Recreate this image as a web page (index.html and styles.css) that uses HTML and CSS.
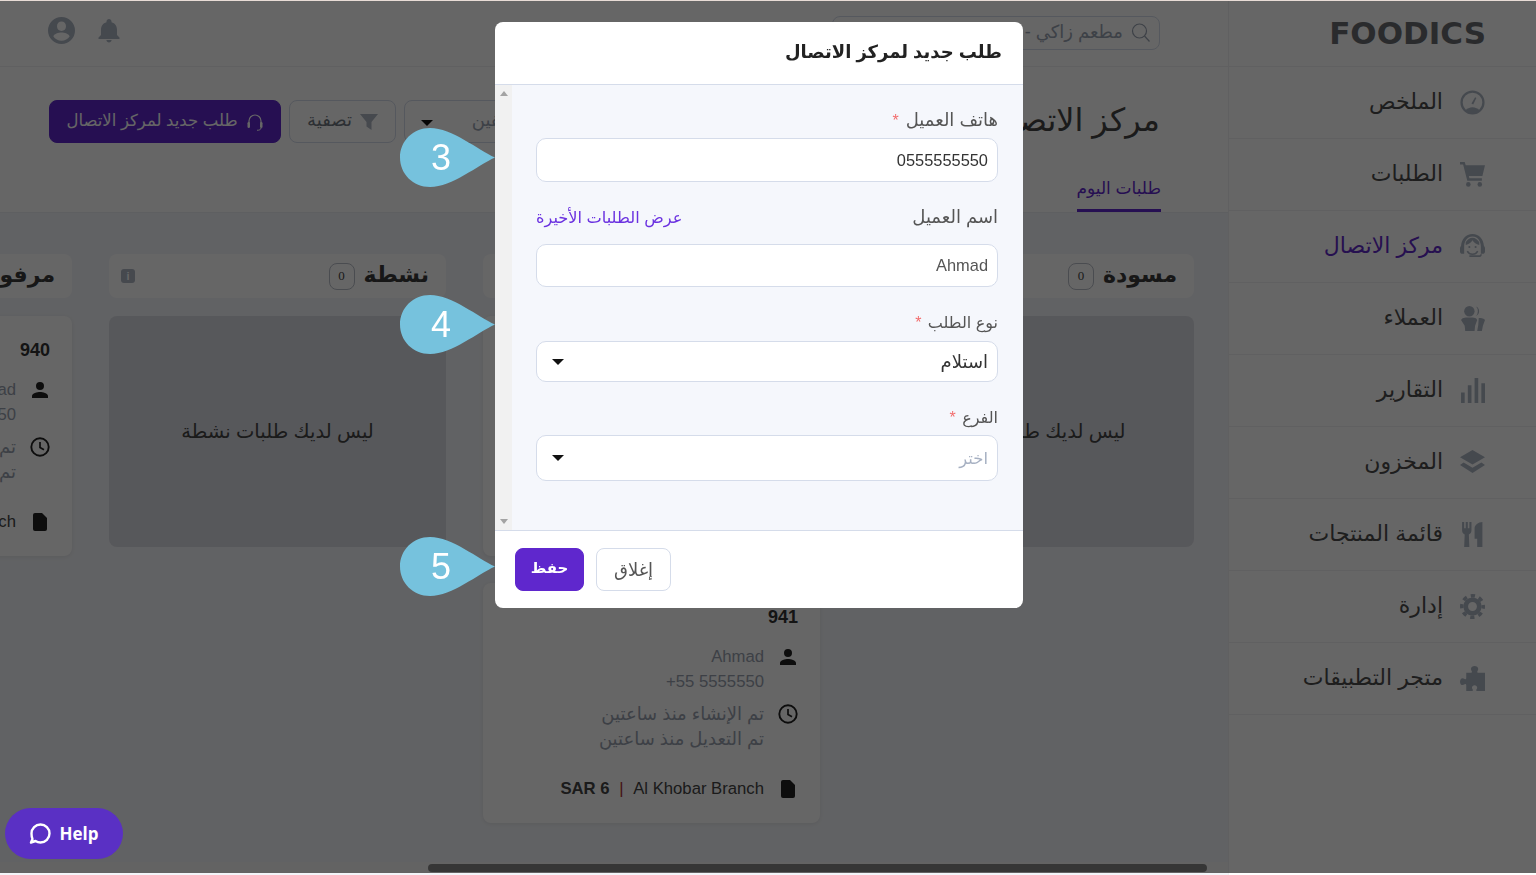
FILE: index.html
```html
<!DOCTYPE html>
<html lang="ar" dir="rtl">
<head>
    <meta charset="UTF-8">
    <meta name="viewport" content="width=device-width, initial-scale=1.0">
    <title>مركز الاتصال</title>
    <link rel="stylesheet" href="styles.css">
</head>
<body>
    <div class="app">
        <aside class="sidebar">
            <div class="logo-row"><span class="logo" dir="ltr">FOODICS</span></div>
            <nav>
                <a class="nav-item">
                    <svg class="nav-icon" viewBox="0 0 24 24"><circle cx="12" cy="12" r="10.500" fill="none" stroke="currentColor" stroke-width="2.200"/><path d="M5 20a9 9 0 0 1 14 0 10.500 10.500 0 0 1-14 0z" fill="currentColor"/><path d="M11 13l3.500-6 1.200.6-3 6.200z" fill="currentColor"/></svg>
                    <span>الملخص</span>
                </a>
                <a class="nav-item">
                    <svg class="nav-icon" viewBox="0 0 24 24"><path d="M0 0h4.500l1 3H24l-2.500 10.500H8.500l.5 2h12v2.500H7L3 2.500H0z" fill="currentColor"/><circle cx="8" cy="21.500" r="2.200" fill="currentColor"/><circle cx="19" cy="21.500" r="2.200" fill="currentColor"/></svg>
                    <span>الطلبات</span>
                </a>
                <a class="nav-item active">
                    <svg class="nav-icon" viewBox="0 0 24 24"><path d="M12 0C5.500 0 1.500 5 1 11.500 .4 12 0 13 0 14v3c0 1.200 1 2 2 2h2v-7C4 7 7 2.500 12 2.500S20 7 20 12v7h2c1 0 2-.8 2-2v-3c0-1-.4-2-1-2.500C22.500 5 18.500 0 12 0z" fill="currentColor"/><path d="M12 6c-1.500 2.500-3.500 4-6.500 4.500V8C7 5 9.500 3.500 12 3.500S17 5 18.500 8v2.500C15.500 10 13.500 8.500 12 6z" fill="currentColor"/><circle cx="9" cy="12.500" r="1" fill="currentColor"/><circle cx="15" cy="12.500" r="1" fill="currentColor"/><path d="M7 16.500c1 2 3 3 5 3s4-1 5-3" fill="none" stroke="currentColor" stroke-width="1.400"/><path d="M9 22h10c1 0 2-1 2-2.500h-1.500c0 .5-.5 1-1 1H9z" fill="currentColor"/></svg>
                    <span>مركز الاتصال</span>
                </a>
                <a class="nav-item">
                    <svg class="nav-icon" viewBox="0 0 24 24"><circle cx="9" cy="5" r="5" fill="currentColor"/><path d="M15.500.5a5 5 0 0 1 0 9 7 7 0 0 0 0-9z" fill="currentColor"/><path d="M1 13.500C2 11.500 4 11 9 11s7 .5 7.500 2.500L14.500 19l-.5 5H5l-.5-5z" fill="currentColor"/><path d="M18 11.500c3 0 5 .5 6 2l-2 5.500-1 5h-4.500l1-5.500z" fill="currentColor"/></svg>
                    <span>العملاء</span>
                </a>
                <a class="nav-item">
                    <svg class="nav-icon" viewBox="0 0 24 24"><path d="M1 14h3.500v10H1zM7.500 7h3.500v17H7.500zM14 0h3.500v24H14zM20.500 5H24v19h-3.500z" fill="currentColor"/></svg>
                    <span>التقارير</span>
                </a>
                <a class="nav-item">
                    <svg class="nav-icon" viewBox="0 0 24 24"><path d="M12 0l12 7-12 7L0 7z" fill="currentColor"/><path d="M3.500 12L0 14.500 12 22l12-7.500-3.500-2.500-8.500 5z" fill="currentColor"/></svg>
                    <span>المخزون</span>
                </a>
                <a class="nav-item">
                    <svg class="nav-icon" viewBox="0 0 24 24"><path d="M2 0h2v6h1.500V0h2v6H9V0h2v8c0 2-1 3.500-2.500 4L9 24H4l.5-12C3 11.500 2 10 2 8z" fill="currentColor"/><path d="M21.500 0v24h-5v-8H14V6c0-3 3.500-6 7.500-6z" fill="currentColor"/></svg>
                    <span>قائمة المنتجات</span>
                </a>
                <a class="nav-item">
                    <svg class="nav-icon" viewBox="0 0 24 24"><circle cx="12" cy="12" r="6.500" fill="none" stroke="currentColor" stroke-width="4.500"/><circle cx="12" cy="12" r="10.300" fill="none" stroke="currentColor" stroke-width="3.400" stroke-dasharray="4.100 3.990" stroke-dashoffset="2"/></svg>
                    <span>إدارة</span>
                </a>
                <a class="nav-item">
                    <svg class="nav-icon" viewBox="0 0 24 24"><path d="M24 12v-5.500h-6.500c-.8 0-1.200-.8-.8-1.500.5-.8.8-1.500.8-2.200C17.500 1.200 15.800 0 14 0s-3.500 1.200-3.500 2.800c0 .7.300 1.400.8 2.200.4.700 0 1.500-.8 1.500H6v5.300c0 .8-.8 1.200-1.500.7-.8-.5-1.400-.8-2.100-.8C1.100 11.700 0 13.300 0 15s1.100 3.300 2.400 3.300c.7 0 1.300-.3 2.100-.8.700-.5 1.500-.1 1.500.7V24h5.500c.8 0 1.200-.8.700-1.500-.5-.7-.7-1.200-.7-1.800 0-1.200 1.100-2.200 2.500-2.200s2.500 1 2.500 2.200c0 .6-.2 1.100-.7 1.800-.5.700-.1 1.500.7 1.500H24v-6.500z" fill="currentColor"/></svg>
                    <span>متجر التطبيقات</span>
                </a>
            </nav>
        </aside>

        <main class="main">
            <header class="topbar">
                <div class="search">
                    <svg class="search-icon" viewBox="0 0 20 20"><circle cx="8.500" cy="8" r="7" fill="none" stroke="currentColor" stroke-width="1.200"/><path d="M13.500 13l5 5.500" stroke="currentColor" stroke-width="1.200"/></svg>
                    <span>مطعم زاكي - الفرع الرئيسي</span>
                </div>
                <div class="top-icons">
                    <svg class="bell" viewBox="0 0 24 24"><path d="M12 23.500c1.300 0 2.600-1 2.600-2.500H9.400c0 1.500 1.300 2.500 2.600 2.500zm8-7.500v-5c0-4-2-7-5.500-7.800V2.500C14.500 1 13.400 0 12 0S9.500 1 9.500 2.500v.7C6 4 4 7 4 11v5l-2.500 2.500V20h21v-1.500z" fill="currentColor"/></svg>
                    <svg class="user" viewBox="0 0 24 24"><path d="M12 0a12 12 0 1 0 0 24 12 12 0 0 0 0-24zm0 4c2.300 0 4 1.800 4 4.200s-1.700 4.200-4 4.200-4-1.800-4-4.200S9.700 4 12 4zm0 17.200c-3 0-5.700-1.500-7.200-3.800 0-2.400 4.800-3.700 7.200-3.700s7.200 1.300 7.200 3.700c-1.500 2.300-4.200 3.800-7.200 3.800z" fill="currentColor"/></svg>
                </div>
            </header>

            <section class="page-head">
                <div class="title-row">
                    <h1>مركز الاتصال</h1>
                    <div class="actions">
                        <div class="btn select-btn"><span>جميع الموظفين</span><i class="caret"></i></div>
                        <div class="btn filter-btn">
                            <svg class="btn-icon" viewBox="0 0 18 18"><path d="M0 1h18l-6.500 8v8L6.500 13.500V9z" fill="currentColor"/></svg>
                            <span>تصفية</span>
                        </div>
                        <div class="btn new-btn">
                            <svg class="btn-icon" viewBox="0 0 18 18"><path d="M3 10V8a6 6 0 0 1 12 0v2" fill="none" stroke="currentColor" stroke-width="1.200"/><rect x="1.500" y="9" width="2.500" height="6" rx="1.250" fill="currentColor"/><rect x="14" y="9" width="2.500" height="6" rx="1.250" fill="currentColor"/><path d="M15 15c0 1.500-1.500 2.300-4 2.300" fill="none" stroke="currentColor"/></svg>
                            <span>طلب جديد لمركز الاتصال</span>
                        </div>
                    </div>
                </div>
                <div class="tabs"><a class="tab">طلبات اليوم</a></div>
            </section>

            <section class="board">
                <div class="column">
                    <div class="col-head"><h2>مسودة</h2><span class="count">0</span></div>
                    <div class="empty">ليس لديك طلبات مسودة</div>
                </div>

                <div class="column">
                    <div class="col-head"><h2>قيد الانتظار</h2><span class="count">2</span></div>
                    <div class="card">
                        <div class="card-num">942</div>
                        <div class="card-row muted">
                            <svg class="card-icon" viewBox="0 0 24 24"><path d="M12 12a4 4 0 1 0 0-8 4 4 0 0 0 0 8zm0 2c-2.700 0-8 1.300-8 4v2h16v-2c0-2.700-5.300-4-8-4z"/></svg>
                            <div class="latin">Ahmad<br><span dir="ltr">+55 5555550</span></div>
                        </div>
                    </div>
                    <div class="card">
                        <div class="card-num">941</div>
                        <div class="card-row muted">
                            <svg class="card-icon" viewBox="0 0 24 24"><path d="M12 12a4 4 0 1 0 0-8 4 4 0 0 0 0 8zm0 2c-2.700 0-8 1.300-8 4v2h16v-2c0-2.700-5.300-4-8-4z"/></svg>
                            <div class="latin">Ahmad<br><span dir="ltr">+55 5555550</span></div>
                        </div>
                        <div class="card-row muted time">
                            <svg class="card-icon" viewBox="0 0 24 24"><circle cx="12" cy="12" r="8.700" fill="none" stroke="currentColor" stroke-width="1.900"/><path d="M12 7v5.500l4 2.300" fill="none" stroke="currentColor" stroke-width="1.700"/></svg>
                            <div>تم الإنشاء منذ ساعتين<br>تم التعديل منذ ساعتين</div>
                        </div>
                        <div class="card-row foot">
                            <svg class="card-icon" viewBox="0 0 24 24"><path d="M14 3H7a2 2 0 0 0-2 2v14a2 2 0 0 0 2 2h10a2 2 0 0 0 2-2V8z"/></svg>
                            <div class="latin">Al Khobar Branch <span class="sep">|</span> <b dir="ltr">SAR 6</b></div>
                        </div>
                    </div>
                </div>

                <div class="column">
                    <div class="col-head">
                        <h2>نشطة</h2><span class="count">0</span>
                        <span class="info">i</span>
                    </div>
                    <div class="empty">ليس لديك طلبات نشطة</div>
                </div>

                <div class="column">
                    <div class="col-head"><h2>مرفوضة</h2><span class="count">1</span></div>
                    <div class="card">
                        <div class="card-num">940</div>
                        <div class="card-row muted">
                            <svg class="card-icon" viewBox="0 0 24 24"><path d="M12 12a4 4 0 1 0 0-8 4 4 0 0 0 0 8zm0 2c-2.700 0-8 1.300-8 4v2h16v-2c0-2.700-5.300-4-8-4z"/></svg>
                            <div class="latin">Ahmad<br><span dir="ltr">+55 5555550</span></div>
                        </div>
                        <div class="card-row muted time">
                            <svg class="card-icon" viewBox="0 0 24 24"><circle cx="12" cy="12" r="8.700" fill="none" stroke="currentColor" stroke-width="1.900"/><path d="M12 7v5.500l4 2.300" fill="none" stroke="currentColor" stroke-width="1.700"/></svg>
                            <div>تم الإنشاء منذ ساعتين<br>تم التعديل منذ ساعتين</div>
                        </div>
                        <div class="card-row foot">
                            <svg class="card-icon" viewBox="0 0 24 24"><path d="M14 3H7a2 2 0 0 0-2 2v14a2 2 0 0 0 2 2h10a2 2 0 0 0 2-2V8z"/></svg>
                            <div class="latin">Al Khobar Branch</div>
                        </div>
                    </div>
                </div>
            </section>

            <div class="hscroll"><div class="hscroll-thumb"></div></div>
        </main>
    </div>

    <div class="backdrop"></div>

    <div class="modal">
        <div class="modal-head"><h3>طلب جديد لمركز الاتصال</h3></div>
        <div class="modal-body">
            <div class="form">
                <label class="label">هاتف العميل <em>*</em></label>
                <div class="input first">0555555550</div>

                <div class="label-row">
                    <label class="label">اسم العميل</label>
                    <a class="link">عرض الطلبات الأخيرة</a>
                </div>
                <div class="input second">Ahmad</div>

                <label class="label small">نوع الطلب <em>*</em></label>
                <div class="input third"><span>استلام</span><i class="caret"></i></div>

                <label class="label small">الفرع <em>*</em></label>
                <div class="input fourth"><span class="placeholder">اختر</span><i class="caret"></i></div>
            </div>
            <div class="scrollbar"><i class="arrow-up"></i><i class="arrow-down"></i></div>
        </div>
        <div class="modal-foot">
            <div class="btn close-btn">إغلاق</div>
            <div class="btn save-btn">حفظ</div>
        </div>
    </div>

    <div class="callout call-3"><svg viewBox="0 0 95 59"><path d="M95 29.500C78 22 52 0 30 0 13 0 0 13 0 29.500S13 59 30 59c22 0 48-22 65-29.500z"/></svg><span>3</span></div>
    <div class="callout call-4"><svg viewBox="0 0 95 59"><path d="M95 29.500C78 22 52 0 30 0 13 0 0 13 0 29.500S13 59 30 59c22 0 48-22 65-29.500z"/></svg><span>4</span></div>
    <div class="callout call-5"><svg viewBox="0 0 95 59"><path d="M95 29.500C78 22 52 0 30 0 13 0 0 13 0 29.500S13 59 30 59c22 0 48-22 65-29.500z"/></svg><span>5</span></div>

    <div class="help">
        <svg viewBox="0 0 24 24"><path d="M12.500 2.500a9 9 0 0 1 0 18c-2 0-3.500-.5-5-1.500l-4.500 1.500 1.500-3.500C3.800 15.800 3.500 13.500 3.500 11.500a9 9 0 0 1 9-9z" fill="none" stroke="#fff" stroke-width="2.400" stroke-linejoin="round"/></svg>
        <span>Help</span>
    </div>
</body>
</html>
```

FILE: styles.css
```css
* {
    box-sizing: border-box;
}
html, body {
    margin: 0;
    height: 100%;
    overflow: hidden;
}
body {
    font-family: "Liberation Sans", "DejaVu Sans", sans-serif;
    font-size: 16px;
    color: #4a4a4a;
    background: #fff;
}
.app {
    display: flex;
    height: 875px;
    border-top: 1px solid #e8dcd6;
}

/* sidebar */
.sidebar {
    flex: 0 0 308px;
    background: #fff;
    border-left: 1px solid #f0f0f2;
}
.logo-row {
    height: 66px;
    padding-right: 50px;
    padding-top: 14px;
    display: flex;
    border-bottom: 1px solid #f0f0f2;
}
.logo {
    font-family: "DejaVu Sans", sans-serif;
    font-weight: 700;
    font-size: 31px;
    line-height: 36px;
    color: #6a6c70;
}
.nav-item {
    display: flex;
    align-items: center;
    gap: 17px;
    height: 72px;
    padding-right: 51px;
    font-size: 22px;
    color: #4c4c4c;
    border-bottom: 1px solid #f0f0f2;
}
.nav-item span {
    margin-top: -2px;
}
.nav-icon {
    width: 25px;
    height: 25px;
    color: #adb6c4;
    flex: none;
}
.nav-item.active {
    color: #5f2ac8;
}

/* main area */
.main {
    flex: 1;
    min-width: 0;
    position: relative;
    overflow: hidden;
    background: #f3f5f9;
}
.topbar {
    height: 66px;
    background: #fff;
    border-bottom: 1px solid #f0f0f2;
    display: flex;
    align-items: center;
    justify-content: space-between;
    padding: 0 68px 2px 48px;
}
.search {
    width: 328px;
    height: 34px;
    border: 1px solid #d5dcea;
    border-radius: 8px;
    display: flex;
    align-items: center;
    gap: 8px;
    padding: 0 8px 2px 0;
    font-size: 18px;
    color: #9aa3b2;
}
.search-icon {
    width: 20px;
    height: 20px;
    color: #9aa3b2;
    margin-top: 2px;
}
.top-icons {
    display: flex;
    align-items: center;
    gap: 22px;
    color: #adb6c4;
    margin-top: -4px;
}
.top-icons .bell {
    width: 24px;
    height: 26px;
}
.top-icons .user {
    width: 27px;
    height: 27px;
}
.page-head {
    height: 146px;
    background: #fff;
    border-bottom: 1px solid #eceef3;
    padding: 33px 68px 0 49px;
}
.title-row {
    display: flex;
    justify-content: space-between;
    height: 77px;
}
h1 {
    margin: -2px 0 0;
    font-size: 32px;
    font-weight: 400;
    line-height: 44px;
    color: #444;
}
.actions {
    display: flex;
    gap: 8px;
}
.btn {
    display: flex;
    align-items: center;
    justify-content: center;
    height: 43px;
    border-radius: 8px;
    font-size: 18px;
    border: 1px solid #d5dcea;
    background: #fff;
    color: #6f7680;
}
.btn-icon {
    width: 18px;
    height: 18px;
    flex: none;
}
.actions .btn span {
    margin-top: -3px;
}
.select-btn {
    width: 198px;
    justify-content: space-between;
    padding: 0 15px 0 16px;
    color: #9aa3b2;
}
.select-btn .caret {
    margin-top: 2px;
}
.filter-btn {
    width: 107px;
    gap: 8px;
}
.filter-btn .btn-icon {
    color: #aeb6c2;
}
.new-btn {
    width: 232px;
    gap: 8px;
    font-size: 16.500px;
    background: #5f27cd;
    border-color: #5f27cd;
    color: #fff;
}
.tabs {
    display: flex;
}
.tab {
    font-size: 17px;
    line-height: 24px;
    height: 35px;
    color: #5f27cd;
    border-bottom: 3px solid #5f27cd;
    margin-right: -1px;
    width: 84px;
    white-space: nowrap;
}

.board {
    display: flex;
    gap: 37px;
    padding: 41px 34px 0 0;
}
.column {
    flex: 0 0 337px;
}
.col-head {
    height: 44px;
    background: #fff;
    border-radius: 8px;
    display: flex;
    align-items: center;
    gap: 9px;
    padding: 0 17px 0 12px;
    margin-bottom: 18px;
}
.col-head h2 {
    margin: -3px 0 0;
    font-size: 22px;
    color: #3a3a3a;
}
.count {
    width: 26px;
    height: 27px;
    border: 1px solid #b9bec8;
    border-radius: 8px;
    font-family: "Liberation Serif", serif;
    font-size: 13px;
    display: flex;
    align-items: center;
    justify-content: center;
    color: #444;
}
.info {
    margin-right: auto;
    width: 14px;
    height: 14px;
    border-radius: 3px;
    background: #aeb6c4;
    color: #fff;
    font-size: 11px;
    font-weight: 700;
    display: flex;
    align-items: center;
    justify-content: center;
}
.empty {
    height: 231px;
    background: #dadce3;
    border-radius: 8px;
    display: flex;
    align-items: center;
    justify-content: center;
    font-size: 19.500px;
    color: #444;
}
.card {
    height: 240px;
    background: #fff;
    border-radius: 8px;
    box-shadow: 0 1px 4px rgba(0,0,0,0.08);
    padding: 22px 20px;
    margin-bottom: 27px;
}
.card-num {
    font-weight: 700;
    font-size: 18px;
    line-height: 24px;
    color: #333;
    padding-right: 2px;
}
.card-row {
    display: flex;
    gap: 12px;
    margin-top: 16px;
    line-height: 24.500px;
    font-size: 18px;
}
.card-row .latin {
    font-size: 16.700px;
}
.card-row.time {
    margin-top: 8px;
}
.card-row.foot {
    margin-top: 26px;
    color: #444;
}
.muted {
    color: #98a1ae;
}
.card-icon {
    width: 24px;
    height: 24px;
    flex: none;
    fill: #222;
    color: #222;
}
.sep {
    color: #a33;
    margin: 0 5px;
}

/* overlay, modal */
.backdrop {
    position: fixed;
    top: 1px;
    left: 0;
    right: 0;
    bottom: 2px;
    background: rgba(0,0,0,0.6);
}
.modal {
    position: fixed;
    left: 495px;
    top: 22px;
    width: 528px;
    height: 586px;
    background: #fff;
    border-radius: 8px;
    display: flex;
    flex-direction: column;
    overflow: hidden;
}
.modal-head {
    height: 63px;
    border-bottom: 1px solid #d5dcea;
    padding: 0 21px 3px;
    display: flex;
    align-items: center;
}
.modal-head h3 {
    margin: 0;
    font-size: 18px;
    font-weight: 700;
    color: #222;
}
.modal-body {
    flex: 1;
    display: flex;
    background: #f5f7fc;
}
.form {
    flex: 1;
    padding: 23px 25px 0 24px;
}
.scrollbar {
    flex: 0 0 17px;
    background: #f1f1f1;
    display: flex;
    flex-direction: column;
    justify-content: space-between;
    align-items: center;
    padding: 6px 0;
}
.arrow-up {
    border: 4px solid transparent;
    border-top: 0;
    border-bottom: 5px solid #a3a3a3;
}
.arrow-down {
    border: 4px solid transparent;
    border-bottom: 0;
    border-top: 5px solid #a3a3a3;
}
.label {
    display: block;
    height: 24px;
    line-height: 24px;
    font-size: 18px;
    color: #555;
}
.label.small {
    font-size: 16px;
}
.label em {
    color: #f26d6d;
    font-style: normal;
    font-size: 16px;
    margin-right: 2px;
}
.label-row {
    display: flex;
    justify-content: space-between;
    height: 24px;
}
.link {
    line-height: 24px;
    font-size: 16.200px;
    color: #6b32e0;
}
.input {
    display: flex;
    align-items: center;
    justify-content: space-between;
    background: #fff;
    border: 1px solid #d5dcea;
    border-radius: 10px;
    padding: 0 9px 0 15px;
    font-size: 16.400px;
    color: #333;
}
.input.first {
    height: 44px;
    margin: 6px 0 23px;
}
.input.second {
    height: 43px;
    margin: 15px 0 24px;
    color: #555;
}
.input.third {
    height: 41px;
    margin: 6px 0 24px;
    font-size: 18px;
}
.input.fourth {
    height: 46px;
    margin-top: 5px;
}
.placeholder {
    color: #a6b0c2;
}
.caret {
    border: 6px solid transparent;
    border-bottom: 0;
    border-top: 6px solid #111;
}
.modal-foot {
    height: 78px;
    border-top: 1px solid #d5dcea;
    display: flex;
    justify-content: flex-end;
    gap: 12px;
    padding: 17px 0 0 20px;
}
.close-btn {
    width: 75px;
    color: #555;
}
.save-btn {
    width: 69px;
    background: #5f27cd;
    border-color: #5f27cd;
    color: #fff;
    font-weight: 700;
    font-size: 15px;
    padding-bottom: 3px;
}

.hscroll {
    position: absolute;
    left: 0;
    right: 0;
    top: 861px;
    height: 11px;
    background: #f7f7f7;
    padding: 2px 21px 1px 0;
}
.hscroll-thumb {
    width: 779px;
    height: 8px;
    border-radius: 4px;
    background: #888;
}

/* numbered markers of the guide */
.callout {
    position: fixed;
    left: 400px;
    width: 95px;
    height: 59px;
}
.callout svg {
    display: block;
    width: 95px;
    height: 59px;
    fill: #76c2dd;
}
.callout span {
    position: absolute;
    left: 22px;
    width: 38px;
    top: 7px;
    text-align: center;
    color: #fff;
    font-size: 36px;
    line-height: 46px;
}
.call-3 { top: 128px; }
.call-4 { top: 295px; }
.call-5 { top: 537px; }

.help {
    position: fixed;
    left: 5px;
    top: 808px;
    width: 118px;
    height: 51px;
    border-radius: 26px;
    background: #5a30c4;
    color: #fff;
    display: flex;
    flex-direction: row-reverse;
    align-items: center;
    justify-content: center;
    gap: 8px;
    padding-right: 2px;
    font-family: "Open Sans", sans-serif;
    font-weight: 700;
    font-size: 17px;
}
.help svg {
    width: 24px;
    height: 24px;
}
```
